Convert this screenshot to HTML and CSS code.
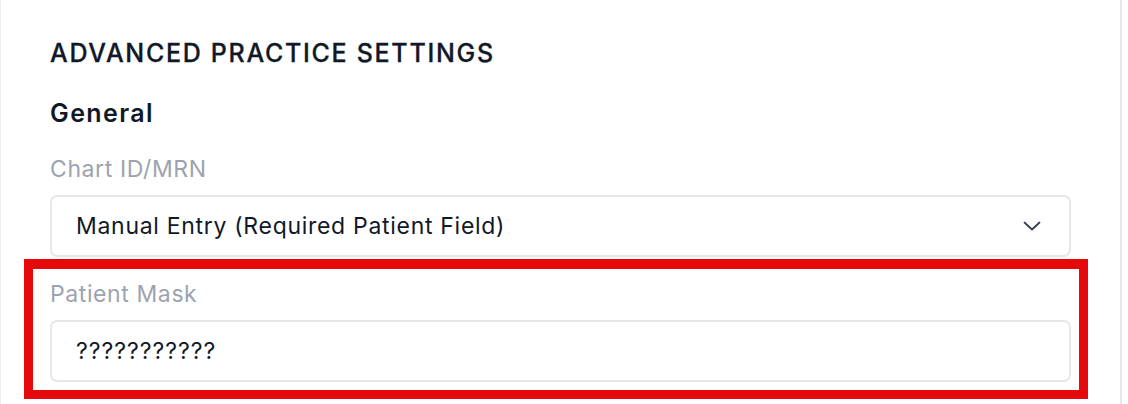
FILE: index.html
```html
<!DOCTYPE html>
<html lang="en">
<head>
<meta charset="utf-8">
<title>Advanced Practice Settings</title>
<link rel="stylesheet" href="styles.css">
</head>
<body>
<div class="card">
  <h1 class="title">ADVANCED PRACTICE SETTINGS</h1>
  <h2 class="subtitle">General</h2>
  <div class="field">
    <label class="label">Chart ID/MRN</label>
    <div class="select">
      <span class="value">Manual Entry (Required Patient Field)</span>
      <svg class="chevron" width="18" height="10" viewBox="0 0 18 10" fill="none"><path d="M1.5 1.5 L9 8.5 L16.5 1.5" stroke="#374151" stroke-width="1.8" stroke-linecap="round" stroke-linejoin="round"/></svg>
    </div>
  </div>
  <div class="highlight">
    <div class="field">
      <label class="label">Patient Mask</label>
      <div class="input"><span class="value mask">???????????</span></div>
    </div>
  </div>
</div>
</body>
</html>
```
FILE: styles.css
```css
html, body {
  margin: 0;
  padding: 0;
  background: #ffffff;
}
body {
  font-family: Inter, "Noto Sans", "Liberation Sans", sans-serif;
  color: #111827;
  width: 1128px;
  height: 404px;
  overflow: hidden;
}
.card {
  box-sizing: border-box;
  width: 1122px;
  border-left: 1px solid #eceef1;
  border-right: 2px solid #e6e7ea;
  padding: 37px 49px 6px 49px;
  height: 404px;
}
.title {
  margin: 0;
  font-size: 25px;
  line-height: 32px;
  font-weight: 500;
  letter-spacing: 1.7px;
  -webkit-text-stroke: 0.3px #111827;
}
.subtitle {
  margin: 28px 0 0 0;
  font-size: 25px;
  line-height: 32px;
  font-weight: 600;
  letter-spacing: 1.4px;
}
.field {
  display: flex;
  flex-direction: column;
}
.card > .field {
  margin-top: 26px;
}
.label {
  font-size: 23px;
  line-height: 28px;
  letter-spacing: 0.6px;
  color: #9ca3af;
  margin-bottom: 12px;
}
.select, .input {
  box-sizing: border-box;
  height: 62px;
  border: 2px solid #e6e7ea;
  border-radius: 7px;
  display: flex;
  align-items: center;
  padding: 0 24px;
  background: #fff;
}
.select {
  justify-content: space-between;
  padding-right: 28px;
}
.value {
  font-size: 23px;
  line-height: 28px;
  letter-spacing: 0.7px;
  color: #111827;
}
.mask {
  letter-spacing: 1px;
}
.highlight {
  margin: 2px -17px 0 -26px;
  border: 9px solid #e6090b;
  border-top-width: 10px;
  padding: 11px 8px 8px 17px;
}
```
